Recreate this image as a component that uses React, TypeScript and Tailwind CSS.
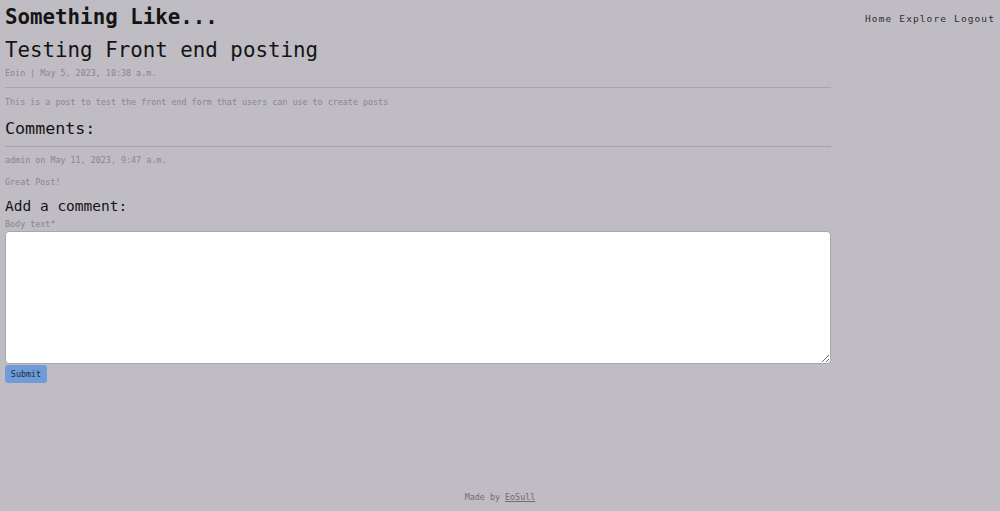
const mono = "font-['DejaVu_Sans_Mono','Liberation_Mono',monospace]";

const App = () => {
  return (
    <div className={`flex min-h-screen flex-col bg-[#bfbcc3] ${mono}`}>
      <header className="flex h-[33px] items-center justify-between px-[5px] pt-[1px]">
        <h1 className="text-[20.8px] font-bold leading-[32px] text-[#141414]">
          Something Like...
        </h1>
        <nav className="flex gap-[7px] pt-[4px] text-[9.5px] tracking-[1.1px] text-[#2e2d31]">
          <a href="#">Home</a>
          <a href="#">Explore</a>
          <a href="#">Logout</a>
        </nav>
      </header>
      <main className="ml-[5px] w-[826px]">
        <h2 className="text-[20.8px] leading-[35px] text-[#141414]">
          Testing Front end posting
        </h2>
        <p className="text-[8.4px] leading-[10px] text-[#89868d]">
          Eoin | May 5, 2023, 10:38 a.m.
        </p>
        <div className="mt-[9px] h-[1px] bg-[#a6a3aa]" />
        <p className="mt-[9px] text-[8.4px] leading-[10px] text-[#89868d]">
          This is a post to test the front end form that users can use to create posts
        </p>
        <h3 className="mt-[9px] text-[16.7px] leading-[24px] text-[#141414]">
          Comments:
        </h3>
        <div className="mt-[6px] h-[1px] bg-[#a6a3aa]" />
        <p className="mt-[8px] text-[8.4px] leading-[10px] text-[#89868d]">
          admin on May 11, 2023, 9:47 a.m.
        </p>
        <p className="mt-[12px] text-[8.4px] leading-[10px] text-[#89868d]">
          Great Post!
        </p>
        <h4 className="mt-[9px] text-[14.5px] leading-[20px] text-[#141414]">
          Add a comment:
        </h4>
        <form>
          <label className="mt-[3px] block text-[8.4px] leading-[10px] text-[#89868d]">
            Body text*
          </label>
          <textarea className="mt-[2px] block h-[133px] w-full rounded-[4px] border border-[#a9a6ad] bg-white" />
          <button
            className="mt-[1px] block h-[18px] w-[42px] rounded-[3px] bg-[#6f9bd8] text-[8.4px] text-[#1f2a3d]"
            type="button"
          >
            Submit
          </button>
        </form>
      </main>
      <footer className="mt-auto pb-[9px] text-center text-[8.4px] leading-[10px] text-[#6f6c73]">
        Made by <a className="underline" href="#">EoSull</a>
      </footer>
    </div>
  );
};

export default App;
